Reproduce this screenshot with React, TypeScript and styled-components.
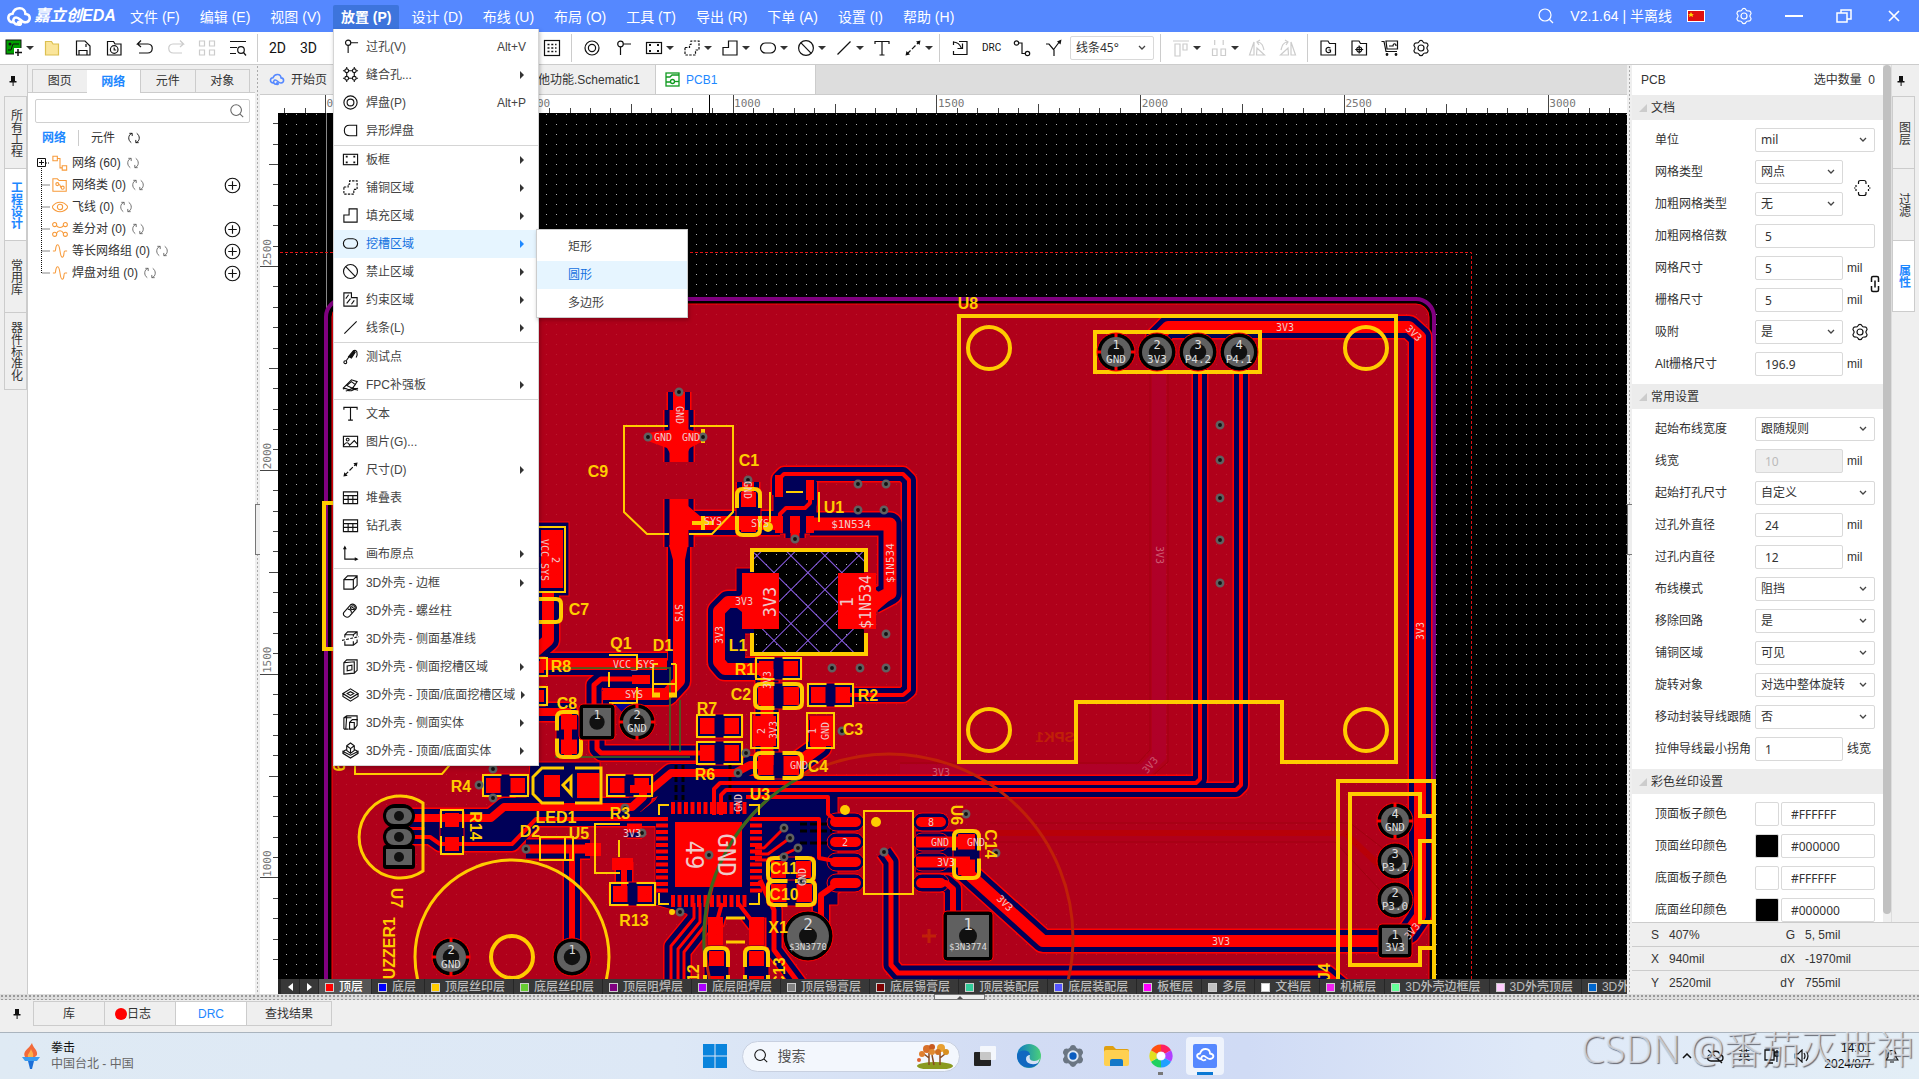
import React from "react";
import styled, { createGlobalStyle } from "styled-components";

const SANS = `"Liberation Sans", "Noto Sans CJK SC", sans-serif`;
const FIELD = `"Noto Sans", "Noto Sans CJK SC", sans-serif`;
const MONO = `"DejaVu Sans Mono", monospace`;

const Global = createGlobalStyle`
  * { box-sizing: border-box; }
  html, body { margin: 0; height: 100%; overflow: hidden; }
  #root { height: 100%; }
  body { font: 12px/16px ${SANS}; color: #333; background: #fff; }
  button, input, select { font: inherit; color: inherit; margin: 0; padding: 0; border: 0; background: none; border-radius: 0; }
  svg { display: block; flex: none; }
  a { color: inherit; text-decoration: none; }
`;

/* ---------- icons ---------- */

const ICONS: Record<string, React.ReactNode> = {
  via: <><circle cx="6.5" cy="5" r="2.8" /><path d="M9.3 5H17M6.5 7.8V16" /></>,
  stitch: <><circle cx="5" cy="5" r="2" /><circle cx="13" cy="5" r="2" /><circle cx="5" cy="13" r="2" /><circle cx="13" cy="13" r="2" /><path d="M5 1v2M5 7v4M5 15v2M13 1v2M13 7v4M13 15v2M1 5h2M7 5h4M15 5h2M1 13h2M7 13h4M15 13h2" /></>,
  pad: <><circle cx="9" cy="9" r="7" /><circle cx="9" cy="9" r="3.6" /></>,
  shape: <path d="M8 3.5H15.5V14.5H8C4.5 14.5 2.5 12 2.5 9S4.500 3.500 8 3.500Z" />,
  board: <><rect x="1.500" y="3.500" width="15" height="11" /><path d="M4 6h2M12 6h2M4 12h2M12 12h2" strokeWidth="1.800" /></>,
  copper: <path d="M2 8.500h4.500v-3h1.500v-3.500h8v9h-3.500v5H2z" strokeDasharray="2.500 1.300" />,
  fill: <path d="M2 8.500h5.500v-6.500h8.500v14H2z" />,
  slot: <rect x="1.500" y="4" width="15" height="10" rx="5" />,
  ban: <><circle cx="9" cy="9" r="7.400" /><path d="M4 3.800L14 14.200" /></>,
  rule: <><path d="M2 2h8v5h6v9H2z" /><path d="M4 8l3-4M5 13l4-5M10 14l3-4" /></>,
  line: <path d="M2.500 15.500L15.500 2.500" />,
  probe: <><circle cx="3.500" cy="15" r="1.500" /><path d="M4.500 13.500L8 8.500" /><path d="M7 9l5-6 2 1.500-4 6z" fill="currentColor" /><path d="M12 3c4-2 5 3 3 7" /></>,
  fpc: <><path d="M1 13L10 4l6 2-2 3" /><path d="M5 10l5-4 4 3-3 4zM1 14c3-3 5 2 8 0s5 0 8-1M4 16c3-2 4 1 7-1s4 0 6 0" /></>,
  text: <path d="M2 5V2.500H16V5M9 2.500V16M6.500 16h5" />,
  image: <><rect x="1.500" y="3.500" width="15" height="11" /><circle cx="6" cy="7" r="1.500" /><path d="M2 13c2-4 5-3 6 0l5-5 3.500 4" /></>,
  dim: <><path d="M3 15L15 3" strokeDasharray="5 2" /><path d="M1.500 16.500l1-4.500 3.500 3.500zM16.500 1.500l-1 4.500-3.500-3.500z" fill="currentColor" strokeWidth="0" /></>,
  table: <path d="M1.500 3h15v12.500h-15zM1.500 7h15M1.500 11h15M6.500 7v8.500M11.500 7v8.500" />,
  origin: <><path d="M3 2V15H16" /><path d="M3 .500l2 4H1zM17.500 15l-4 2v-4z" fill="currentColor" strokeWidth="0" /></>,
  box: <path d="M2 6h10v10H2zM2 6l4-4h10v10l-4 4M12 6l4-4" />,
  screw: <><path d="M2 11l7-8c3-2 7 1 6 4l-7 8c-3 3-8-1-6-4z" /><ellipse cx="11.500" cy="6" rx="2.500" ry="2" /><path d="M10 5l3 2M6 7.500c3 0 4 2 4 4" /></>,
  sideline: <><path d="M3 8V5l3-3h10v4M3 5h9l4-3M3 12v4h9l4-3v-3M12 5v2M12 12v4" /><path d="M0 11l18-4" strokeDasharray="3 1.500" /></>,
  sideslot: <path d="M2 5l11-1v12l-11 1zM2 5l3-3h11v11l-3 3M5.500 8.500l5-1v5l-5 1z" />,
  topslot: <><path d="M1 8l8-5 8 5-8 5zM1 8v3l8 5 8-5V8" /><path d="M5.500 8L9 6l3.500 2L9 10z" /></>,
  sidesolid: <><path d="M2 16V4l3-2h11v5M2 4l8 0M2 16h5M5 2l-1 14" /><path d="M8 9l3-3h5v6l-3 4H8zM8 9h5v7" /></>,
  topsolid: <><path d="M1 10l4-2M17 10l-4-2M1 10v2l8 5 8-5v-2l-8 4z" /><path d="M5 4l4-3 4 3v5l-4 3-4-3zM5 4l4 3 4-3M9 7v5" /></>,
  folder: <path d="M2.500 2.500h6l1.500 2.500h5.500v11h-13z" fill="#fae59b" stroke="#dcc050" />,
  save: <><path d="M2.500 16V2H11l5 5v9z" /><path d="M5 16v-4.500h8V16M12 5v3" /></>,
  history: <><path d="M2.500 2.500h6L10 5h6v11H2.500z" /><circle cx="9.200" cy="10.500" r="3.800" /><path d="M9.200 8.500v2.500h2" /></>,
  undo: <path d="M5 1.500L1.500 5H12c6 0 5.500 9-.500 9H3M1.500 5L5 8" />,
  redo: <path d="M13 1.500L16.500 5H6c-6 0-5.500 9 .500 9h8.500M16.500 5L13 8" />,
  grid4: <path d="M1.500 2h5v5h-5zM11.500 2h5v5h-5zM1.500 11h5v5h-5zM11.500 11h5v5h-5z" />,
  find: <><path d="M1 2.500h16M1 8.500h7M1 14.500h6" /><circle cx="12" cy="11" r="3.300" /><path d="M14.500 13.500L17 16.500" /></>,
  dots: <><rect x="1.500" y="1.500" width="15" height="15" /><path d="M4.500 5.500h9M4.500 9h9M4.500 12.500h9" strokeWidth="1.700" strokeDasharray="2 1.800" /></>,
  import: <><path d="M8 2.500h8v13H2.500V12M2.500 2.500V6" /><path d="M2 3c4 0 7 2 8.500 6.500M6.500 9.500h5v-5" /></>,
  route: <><circle cx="3.500" cy="4" r="2.200" /><circle cx="14.500" cy="14.500" r="2.200" /><path d="M5.700 4H9V14.500h3.300" /></>,
  branch: <><path d="M2 5h3l5 6v6M10 10l6-8" /><path d="M17.500 .500l-1 5-3.500-3z" fill="currentColor" strokeWidth="0" /></>,
  align: <path d="M1 2h16M3 5h5v12H3zM11 5h4v6h-4z" />,
  distribute: <path d="M2.500 10h4.500v6.500H2.500zM11 10h4.500v6.500h-4.500zM4.700 1v5M13.200 1v5" />,
  rotl: <path d="M1.500 16L6 3v13zM8.500 16h8L9 9zM9 3c5 0 6 4 7 8M12 1L9 3l2 3" />,
  rotr: <path d="M16.500 16L12 3v13zM9.500 16h-8L9 9zM9 3C4 3 3 7 2 11M6 1l3 2-2 3" />,
  gerber: <path d="M2 2h7l1.500 2.500H16.500V16H2zM11.500 9c-3-1.500-4.500 0-4.500 2s1.500 3.300 4.500 2v-2H9.500" />,
  order: <><path d="M2 2h7l1.500 2.500H16.500V16H2z" /><circle cx="9.200" cy="10.500" r="2.500" /><path d="M9.200 6.500v8M5.200 10.500h8" /></>,
  cart: <><path d="M.500 2.500H3L5 12.500h11" /><path d="M5 2h11.500v8H6zM8 7h4c0-3 3-3 3 0" /><circle cx="6" cy="15.500" r=".8" fill="currentColor" /><circle cx="15" cy="15.500" r=".8" fill="currentColor" /></>,
  gear: <><path d="M9 1.300c1.200 0 1.600.500 2 1.500.500.900 1.300 1.300 2.300 1.200 1.300-.200 2 .200 2.500 1.300.500 1 .300 1.700-.400 2.400-.700.800-.700 1.800 0 2.600.700.700.900 1.400.400 2.400-.500 1.100-1.200 1.500-2.500 1.300-1-.100-1.800.300-2.300 1.200-.400 1-.800 1.500-2 1.500s-1.600-.500-2-1.500c-.500-.900-1.300-1.300-2.300-1.200-1.300.200-2-.200-2.500-1.300-.500-1-.300-1.700.400-2.400.700-.800.700-1.800 0-2.600-.700-.700-.900-1.400-.400-2.400.500-1.100 1.200-1.500 2.500-1.300 1 .100 1.800-.300 2.300-1.200.400-1 .800-1.500 2-1.500z" /><circle cx="9" cy="9" r="3" /></>,
  search: <><circle cx="8" cy="8" r="6" /><path d="M12.500 12.500L16 16" /></>,
  sync: <><path d="M5.500 15C1 12 1 5 6.500 3M12.500 3c4.500 3 4.500 10-1 12" /><path d="M3 3h3.700v3.500M15 15h-3.700v-3.500" /></>,
  plus: <><circle cx="9" cy="9" r="7.700" /><path d="M9 4.500v9M4.500 9h9" /></>,
  net: <path d="M1 1.500h5v5H1zM11.500 12h5v5h-5zM6 4h3v10.500h2.500" />,
  netclass: <><path d="M1 16V2h5l2 2h8v12z" /><circle cx="6" cy="8" r="1.700" /><circle cx="12" cy="12" r="1.700" /><path d="M7.500 8.500c3 0 1 3 3 3.500" /></>,
  eye: <><path d="M0 9c5-7 13-7 18 0-5 7-13 7-18 0z" /><circle cx="9" cy="9" r="3" /></>,
  diff: <><circle cx="3" cy="4" r="2.300" /><circle cx="15" cy="4" r="2.300" /><circle cx="3" cy="15" r="2.300" /><circle cx="15" cy="15" r="2.300" /><path d="M5 5c2 3 6 3 8 0M5 14c2-4 6-4 8 0" /></>,
  wave: <path d="M1 9h2.500c1 0 0-7 3-7s2 14 5 14 1-7 3-7H17" />,
  snapbox: <path d="M5.500 5V3.500Q5.500 1.500 7.500 1.500H11Q13 1.500 13 3.500V5M5.500 13v1.500Q5.500 16.500 7.500 16.500H11Q13 16.500 13 14.500V13M3 6v2M3 10v2M1 9h1.500M15.500 6v2M15.500 10v2M16 9h1.500" />,
  link: <path d="M5.500 7V3Q5.500 1.500 7 1.500h4Q12.500 1.500 12.500 3v4M5.500 11v4q0 1.500 1.500 1.500h4q1.500 0 1.500-1.500v-4M9 5.500v7" strokeWidth="1.500" />,
};

const IconSvg = styled.svg<{ $c?: string }>`
  color: ${(p) => p.$c || "#111"};
  fill: none;
  stroke: currentColor;
  stroke-width: 1.2;
`;
const Icon = ({ name, size = 18, color }: { name: string; size?: number; color?: string }) => (
  <IconSvg width={size} height={size} viewBox="0 0 18 18" $c={color} aria-hidden="true">{ICONS[name]}</IconSvg>
);

const Pin = () => (
  <svg width="10" height="12" viewBox="0 0 10 12"><path d="M3 1h4v5h1.500v1.500H1.500V6H3zM4.600 7h1v4h-1z" fill="#111" /></svg>
);

/* ---------- shell ---------- */

const Page = styled.div`
  height: 100vh;
  display: flex;
  flex-direction: column;
  overflow: hidden;
`;

const TitleBar = styled.header`
  height: 32px;
  flex: none;
  display: flex;
  align-items: center;
  background: #5588ff;
  color: #fff;
  font-size: 14px;
  padding-left: 6px;
`;
const Logo = styled.div`
  display: flex;
  align-items: center;
  gap: 2px;
  width: 116px;
  font-size: 16px;
  line-height: 20px;
  font-weight: 700;
  font-style: italic;
  white-space: nowrap;
`;
const MenuBar = styled.nav`
  display: flex;
  gap: 4px;
  flex: 1;
  height: 23px;
`;
const MenuSlot = styled.div`
  position: relative;
`;
const MenuTitle = styled.button<{ $open?: boolean }>`
  height: 24px;
  padding: 0 8px;
  white-space: nowrap;
  border-radius: 2px 2px 0 0;
  background: ${(p) => (p.$open ? "#3d74dc" : "transparent")};
  font-weight: ${(p) => (p.$open ? 700 : 400)};
`;
const TitleInfo = styled.div`
  display: flex;
  align-items: center;
  gap: 15px;
  margin-right: 14px;
`;
const WindowButton = styled.button`
  width: 50px;
  height: 32px;
  display: grid;
  place-items: center;
`;

/* ---------- drop-down menu ---------- */

const Menu = styled.div`
  position: absolute;
  z-index: 10;
  top: 24px;
  left: 0;
  width: 206px;
  padding-top: 4px;
  background: #fff;
  color: #444;
  font-size: 12px;
  border: solid #d5d5d5;
  border-width: 0 1px 1px;
  box-shadow: 1px 2px 4px rgba(0, 0, 0, 0.25);
`;
const MenuGroup = styled.div`
  & + & { border-top: 1px solid #d5d5d5; }
`;
const MenuRow = styled.button<{ $on?: boolean }>`
  width: 100%;
  height: 28px;
  display: grid;
  grid-template-columns: 18px 1fr auto;
  gap: 6px;
  align-items: center;
  padding: 0 12px 0 8px;
  text-align: left;
  white-space: nowrap;
  background: ${(p) => (p.$on ? "#e6f5ff" : "#fff")};
  color: ${(p) => (p.$on ? "#1471e0" : "#444")};
`;
const MenuArrow = styled.span<{ $on?: boolean }>`
  border: 4px solid transparent;
  border-left-color: ${(p) => (p.$on ? "#1e88ff" : "#333")};
  border-right-width: 0;
  margin-right: 2px;
`;
const SubMenu = styled.div`
  position: absolute;
  top: 200px;
  left: 202px;
  width: 152px;
  padding: 3px 0 0;
  background: #fff;
  border: 1px solid #ccc;
  box-shadow: 1px 2px 4px rgba(0, 0, 0, 0.25);
`;
const SubRow = styled.button<{ $on?: boolean }>`
  display: block;
  width: 100%;
  height: 28px;
  padding-left: 31px;
  text-align: left;
  background: ${(p) => (p.$on ? "#e6f5ff" : "#fff")};
  color: ${(p) => (p.$on ? "#1471e0" : "#444")};
`;

type Entry = [icon: string, label: string, extra?: string];
const MENU: Entry[][] = [
  [["via", "过孔(V)", "Alt+V"], ["stitch", "缝合孔...", ">"], ["pad", "焊盘(P)", "Alt+P"], ["shape", "异形焊盘"]],
  [["board", "板框", ">"], ["copper", "铺铜区域", ">"], ["fill", "填充区域", ">"], ["slot", "挖槽区域", ">"], ["ban", "禁止区域", ">"], ["rule", "约束区域", ">"], ["line", "线条(L)", ">"]],
  [["probe", "测试点"], ["fpc", "FPC补强板", ">"]],
  [["text", "文本"], ["image", "图片(G)..."], ["dim", "尺寸(D)", ">"], ["table", "堆叠表"], ["table", "钻孔表"], ["origin", "画布原点", ">"]],
  [["box", "3D外壳 - 边框", ">"], ["screw", "3D外壳 - 螺丝柱"], ["sideline", "3D外壳 - 侧面基准线"], ["sideslot", "3D外壳 - 侧面挖槽区域", ">"], ["topslot", "3D外壳 - 顶面/底面挖槽区域", ">"], ["sidesolid", "3D外壳 - 侧面实体", ">"], ["topsolid", "3D外壳 - 顶面/底面实体", ">"]],
];

const PlaceMenu = () => (
  <Menu role="menu">
    {MENU.map((group, i) => (
      <MenuGroup key={i}>
        {group.map(([icon, label, extra]) => {
          const on = label === "挖槽区域";
          return (
            <MenuRow key={label} $on={on} role="menuitem">
              <Icon name={icon} size={17} />
              <span>{label}</span>
              {extra === ">" ? <MenuArrow $on={on} /> : <span>{extra}</span>}
            </MenuRow>
          );
        })}
      </MenuGroup>
    ))}
    <SubMenu role="menu">
      {["矩形", "圆形", "多边形"].map((t) => <SubRow key={t} $on={t === "圆形"} role="menuitem">{t}</SubRow>)}
    </SubMenu>
  </Menu>
);

/* ---------- toolbar ---------- */

const ToolBar = styled.div`
  height: 33px;
  flex: none;
  display: flex;
  align-items: center;
  background: #fff;
  border-bottom: 1px solid #ccc;
`;
const Tool = styled.button<{ $drop?: boolean }>`
  flex: none;
  width: ${(p) => (p.$drop ? 38 : 31)}px;
  height: 32px;
  padding-left: 5px;
  display: flex;
  align-items: center;
  gap: 3px;
  color: #111;
`;
const Caret = styled.span`
  border: 4px solid transparent;
  border-top-color: #333;
  border-bottom-width: 0;
`;
const Divider = styled.span`
  flex: none;
  width: 1px;
  height: 28px;
  margin: 0 6px 0 2px;
  background: #ccc;
`;
const ToolText = styled.span<{ $small?: boolean }>`
  font-size: ${(p) => (p.$small ? 10 : 14)}px;
  font-family: "Roboto", ${SANS};
`;
const ToolGap = styled.span`
  flex: none;
  width: 212px;
`;
const Tools = ({ items }: { items: string[] }) => (
  <>
    {items.map((item) => {
      const drop = item.endsWith("+");
      const dim = item.startsWith("~");
      const name = item.replace(/[+~]/g, "");
      return (
        <Tool key={item} $drop={drop} aria-label={name}>
          <Icon name={name} color={dim ? "#ccc" : undefined} />
          {drop && <Caret />}
        </Tool>
      );
    })}
  </>
);

const SelectBox = styled.span<{ $w: number }>`
  display: grid;
  grid-template-columns: 1fr 22px;
  align-items: center;
  flex: none;
  width: ${(p) => p.$w}px;
  height: 24px;
  background: #fff;
  border: 1px solid #d9d9d9;
  border-radius: 2px;
  font-family: ${FIELD};
  select {
    grid-area: 1 / 1 / 2 / 3;
    width: 100%;
    height: 22px;
    padding-left: 5px;
    appearance: none;
    outline: 0;
  }
  svg { grid-area: 1 / 2; pointer-events: none; justify-self: center; }
`;
const Select = ({ id, value, w, label }: { id?: string; value: string; w: number; label?: string }) => (
  <SelectBox $w={w}>
    <select id={id} aria-label={label}><option>{value}</option></select>
    <svg width="8" height="6" viewBox="0 0 8 6"><path d="M1 1l3 3 3-3" fill="none" stroke="#444" strokeWidth="1.300" /></svg>
  </SelectBox>
);
const ToolSelect = styled.span`
  margin-right: 4px;
  display: flex;
`;

/* ---------- work area ---------- */

const Work = styled.div`
  flex: 1;
  min-height: 0;
  display: flex;
`;
const SideRail = styled.div<{ $right?: boolean }>`
  width: 28px;
  flex: none;
  display: flex;
  flex-direction: column;
  background: #efefef;
  ${(p) => (p.$right ? "border-left: 1px solid #ddd; padding-right: 4px;" : "border-right: 1px solid #ccc; padding-left: 4px;")}
`;
const RailPin = styled.button`
  height: 31px;
  width: 18px;
  display: grid;
  place-items: center;
`;
const RailTab = styled.button<{ $on?: boolean; $h: number }>`
  height: ${(p) => p.$h}px;
  flex: none;
  display: grid;
  place-items: center;
  writing-mode: vertical-rl;
  border: 1px solid #ccc;
  border-bottom-width: 0;
  background: ${(p) => (p.$on ? "#fff" : "#efefef")};
  color: ${(p) => (p.$on ? "#1e88ff" : "#333")};
  font-weight: ${(p) => (p.$on ? 700 : 400)};
  &:last-child { border-bottom-width: 1px; }
`;

const LeftPanel = styled.aside`
  width: 227px;
  flex: none;
  background: #fff;
`;
const PanelTabs = styled.div`
  display: flex;
  height: 28px;
  padding: 4px 6px 0 4px;
  background: linear-gradient(#ccc, #ccc) bottom / 100% 1px no-repeat #efefef;
`;
const PanelTab = styled.button<{ $on?: boolean }>`
  flex: 1;
  border: solid #ccc;
  border-width: 1px 1px ${(p) => (p.$on ? 0 : 1)}px ${(p) => (p.$on ? 0 : 1)}px;
  margin-right: -1px;
  background: ${(p) => (p.$on ? "#fff" : "#efefef")};
  color: ${(p) => (p.$on ? "#1e88ff" : "#333")};
  font-weight: ${(p) => (p.$on ? 700 : 400)};
`;
const SearchField = styled.label`
  display: flex;
  align-items: center;
  height: 24px;
  margin: 6px 5px 0 7px;
  padding: 0 4px;
  border: 1px solid #d0d0d0;
  border-radius: 2px;
  input { flex: 1; min-width: 0; outline: 0; }
`;
const Filter = styled.div`
  display: flex;
  align-items: center;
  height: 29px;
  padding-left: 14px;
  gap: 12px;
  i { width: 1px; height: 16px; background: #ccc; }
`;
const FilterLink = styled.button<{ $on?: boolean }>`
  color: ${(p) => (p.$on ? "#1e88ff" : "#333")};
  font-weight: ${(p) => (p.$on ? 700 : 400)};
`;
const TreeRow = styled.div`
  display: flex;
  align-items: center;
  height: 22px;
  padding: 0 14px 0 6px;
  white-space: nowrap;
  > span { margin: 0 5px 0 4px; }
  button { margin-left: auto; }
`;
const TREE: [string, string, boolean][] = [
  ["net", "网络 (60)", false],
  ["netclass", "网络类 (0)", true],
  ["eye", "飞线 (0)", false],
  ["diff", "差分对 (0)", true],
  ["wave", "等长网络组 (0)", true],
  ["wave", "焊盘对组 (0)", true],
];

const Splitter = styled.div`
  flex: none;
  width: 5px;
  display: flex;
  align-items: center;
  background: radial-gradient(circle, #aaa 1px, transparent 1px) 0 0 / 5px 4px, #efefef;
`;
const Grip = styled.span`
  width: 5px;
  height: 51px;
  background: #eee;
  border: 1px solid #777;
  border-right: 0;
`;

const Center = styled.main`
  flex: 1;
  min-width: 0;
  display: grid;
  grid-template: 30px 18px 1fr 15px / 18px minmax(0, 1fr);
`;
const DocTabs = styled.div`
  grid-column: 1 / 3;
  display: flex;
  background: #ddd;
  border-bottom: 1px solid #ccc;
`;
const DocTab = styled.button<{ $w: number; $on?: boolean; $end?: boolean }>`
  width: ${(p) => p.$w}px;
  flex: none;
  display: flex;
  align-items: center;
  justify-content: ${(p) => (p.$end ? "flex-end" : "flex-start")};
  gap: 6px;
  padding: 0 15px 0 9px;
  white-space: nowrap;
  border-right: 1px solid #ccc;
  background: ${(p) => (p.$on ? "#fff" : "#efefef")};
  color: ${(p) => (p.$on ? "#1e88ff" : "#333")};
`;
const Drawing = styled.svg`
  width: 100%;
  height: 100%;
  overflow: hidden;
  min-height: 0;
`;

const LayerBar = styled.div`
  grid-column: 2;
  display: flex;
  overflow: hidden;
  background: #383838;
`;
const LayerArrows = styled.div`
  display: flex;
  flex: none;
  gap: 1px;
  padding-left: 3px;
  background: #262626;
  button { width: 18px; display: grid; place-items: center; background: #383838; }
`;
const LayerTab = styled.button<{ $on?: boolean }>`
  flex: none;
  display: flex;
  align-items: center;
  gap: 5px;
  padding: 1px 8px 0 6px;
  line-height: 14px;
  border-left: 1px solid #262626;
  background: ${(p) => (p.$on ? "#555" : "#383838")};
  color: ${(p) => (p.$on ? "#fff" : "#bbb")};
  font-weight: 500;
  white-space: nowrap;
`;
const Swatch = styled.i<{ $c: string }>`
  width: 9px;
  height: 9px;
  background: ${(p) => p.$c};
  border: 1px solid #ccc;
`;
const LAYERS: [string, string][] = [
  ["顶层", "#ff0000"], ["底层", "#0000ff"], ["顶层丝印层", "#ffcc00"], ["底层丝印层", "#66cc33"],
  ["顶层阻焊层", "#800080"], ["底层阻焊层", "#aa00ff"], ["顶层锡膏层", "#808080"], ["底层锡膏层", "#800000"],
  ["顶层装配层", "#33cc99"], ["底层装配层", "#5555ff"], ["板框层", "#ff00ff"], ["多层", "#c0c0c0"],
  ["文档层", "#ffffff"], ["机械层", "#f022f0"], ["3D外壳边框层", "#66ff99"], ["3D外壳顶层", "#ffccff"], ["3D外壳底层", "#0066cc"],
];

/* ---------- right panel ---------- */

const RightPanel = styled.aside`
  width: 287px;
  flex: none;
  display: flex;
  flex-direction: column;
  background: #efefef;
`;
const RightTop = styled.div`
  flex: 1;
  min-height: 0;
  display: flex;
`;
const Props = styled.div`
  flex: 1;
  overflow: hidden;
  background: #fff;
`;
const PropsHead = styled.div`
  display: flex;
  justify-content: space-between;
  align-items: center;
  height: 30px;
  padding: 0 8px 0 9px;
`;
const Section = styled.h2`
  display: flex;
  align-items: center;
  gap: 4px;
  height: 25px;
  margin: 0;
  padding-left: 7px;
  background: #ececec;
  font-size: 12px;
  font-weight: 400;
  &::before {
    content: "";
    border: 4px solid #ccc;
    border-top-color: transparent;
    border-left-color: transparent;
  }
`;
const Rows = styled.div`
  display: grid;
  padding: 4px 0;
`;
const Row = styled.div`
  display: flex;
  align-items: center;
  height: 32px;
  padding-left: 23px;
  white-space: nowrap;
  > label { width: 100px; flex: none; }
`;
const Input = styled.input<{ $w: number }>`
  width: ${(p) => p.$w}px;
  height: 24px;
  padding: 0 9px;
  background: #fff;
  border: 1px solid #d9d9d9;
  border-radius: 2px;
  font-family: ${FIELD};
  outline: 0;
  &:disabled { background: #efefef; color: #bbb; }
`;
const Unit = styled.span`
  margin-left: 4px;
`;
const Extra = styled.button<{ $between?: boolean }>`
  margin-left: ${(p) => (p.$between ? 10 : 8)}px;
  ${(p) => p.$between && "align-self: flex-end; margin-bottom: -9px;"}
`;
const LinkExtra = styled(Extra)`
  margin-left: 4px;
`;
const ColorBox = styled.button<{ $c: string }>`
  width: 24px;
  height: 24px;
  margin-right: 2px;
  border: 1px solid #d9d9d9;
  border-radius: 2px;
  background: ${(p) => p.$c};
`;
const ScrollTrack = styled.div`
  width: 8px;
  flex: none;
  background: #efefef;
  &::before {
    content: "";
    display: block;
    height: calc(100% - 8px);
    background: #c1c1c1;
    border-radius: 4px;
  }
`;
const Status = styled.div`
  display: grid;
  grid-template-columns: 27px 90px 26px 1fr;
  column-gap: 10px;
  align-items: center;
  height: 24px;
  border-top: 1px solid #ccc;
  span:nth-child(odd) { text-align: right; }
`;

type Field = { l: string; v: string; k?: "select" | "short" | "input"; u?: string; off?: boolean; x?: string };
const DOC: Field[] = [
  { l: "单位", v: "mil", k: "select" },
  { l: "网格类型", v: "网点", k: "short", x: "snapbox" },
  { l: "加粗网格类型", v: "无", k: "short" },
  { l: "加粗网格倍数", v: "5", k: "input" },
  { l: "网格尺寸", v: "5", u: "mil", x: "link" },
  { l: "栅格尺寸", v: "5", u: "mil" },
  { l: "吸附", v: "是", k: "short", x: "gear" },
  { l: "Alt栅格尺寸", v: "196.9", u: "mil" },
];
const COMMON: Field[] = [
  { l: "起始布线宽度", v: "跟随规则", k: "select" },
  { l: "线宽", v: "10", u: "mil", off: true },
  { l: "起始打孔尺寸", v: "自定义", k: "select" },
  { l: "过孔外直径", v: "24", u: "mil" },
  { l: "过孔内直径", v: "12", u: "mil" },
  { l: "布线模式", v: "阻挡", k: "select" },
  { l: "移除回路", v: "是", k: "select" },
  { l: "铺铜区域", v: "可见", k: "select" },
  { l: "旋转对象", v: "对选中整体旋转", k: "select" },
  { l: "移动封装导线跟随", v: "否", k: "select" },
  { l: "拉伸导线最小拐角", v: "1", u: "线宽" },
];
const COLORS: [string, string][] = [["顶面板子颜色", "#FFFFFF"], ["顶面丝印颜色", "#000000"], ["底面板子颜色", "#FFFFFF"], ["底面丝印颜色", "#000000"]];

const FieldRow = ({ f }: { f: Field }) => (
  <Row>
    <label htmlFor={f.l}>{f.l}</label>
    {f.k === "select" && <Select id={f.l} value={f.v} w={120} />}
    {f.k === "short" && <Select id={f.l} value={f.v} w={88} />}
    {f.k === "input" && <Input id={f.l} defaultValue={f.v} $w={120} />}
    {!f.k && <Input id={f.l} defaultValue={f.v} $w={88} disabled={f.off} />}
    {f.u && <Unit>{f.u}</Unit>}
    {f.x === "gear" && <Extra aria-label="设置"><Icon name="gear" /></Extra>}
    {f.x === "snapbox" && <Extra $between aria-label="网格"><Icon name="snapbox" /></Extra>}
    {f.x === "link" && <LinkExtra $between aria-label="关联"><Icon name="link" /></LinkExtra>}
  </Row>
);

/* ---------- PCB drawing ---------- */

const RED = "#ff0000";
const NAVY = "#000058";
const YEL = "#ffcc00";

type Trace = [d: string, w: number];
const TRACES: Trace[] = [
  ["M1157 350V338L1168 327H1409L1420 337V916L1409 932L1395 941H1043L962 868", 12],
  ["M1200 365V779L1196 783H720L714 789V815", 4],
  ["M1241 365V785L1236 790H726L721 795V815", 4],
  ["M884 852L891 862V965L898 973H1327L1350 992", 5],
  ["M930 883H946L953 889V920", 6],
  ["M679 392V437", 12],
  ["M679 410V462", 19],
  ["M679 499V547", 19],
  ["M679 540V681L667 694H603", 12],
  ["M679 523H780", 14],
  ["M748 482V506", 12],
  ["M779 495V479L784 474H903L909 480V690L903 695H845", 4],
  ["M810 482V503L805 508H786L780 514V524", 4],
  ["M795 518V538", 9],
  ["M810 524H890V593L873 602", 13],
  ["M755 602H728L719 611V662L725 669H767", 12],
  ["M767 669V765", 13],
  ["M820 720V747L795 765", 12],
  ["M540 664H667", 12],
  ["M648 679H601L594 685V712", 5],
  ["M597 737V749L601 753H705", 5],
  ["M548 592V640L525 660", 12],
  ["M535 712H568V757", 8],
  ["M630 789H652L671 773H735L750 765H767", 8],
  ["M410 818H491L504 807H632L643 797V785", 8],
  ["M410 837H430L440 844H512L536 819H668", 4],
  ["M572 848V957", 6],
  ["M526 849H590", 9],
  ["M627 828H642", 9],
  ["M624 862V893", 6],
  ["M746 797H828V814L838 822", 4],
  ["M755 819H819V858L840 862", 4],
  ["M755 848H764L784 828", 3],
  ["M755 854H768L790 838", 3],
  ["M755 860H772L798 848", 3],
  ["M838 883L821 895V926", 6],
  ["M706 903V924L684 952V985", 3],
  ["M700 903V922L678 949V985", 3],
  ["M694 903V918L671 946V985", 3],
  ["M722 903L716 925", 4],
  ["M738 903L755 925", 4],
  ["M760 880L774 910V950L800 985", 5],
  ["M916 842H975", 11],
  ["M916 862H970", 11],
];
const JOINTS = [[830, 861], [916, 946]];

type Part = [x: number, y: number, w: number, h: number, vertical?: boolean, round?: boolean];
const PARTS: Part[] = [
  [737, 489, 23, 46, true, true],
  [756, 658, 45, 21],
  [755, 684, 47, 24, false, true],
  [808, 684, 45, 22],
  [755, 753, 47, 25, false, true],
  [697, 715, 45, 22],
  [697, 742, 45, 22],
  [557, 712, 24, 45, true, true],
  [502, 658, 45, 18],
  [502, 687, 45, 18],
  [483, 775, 45, 21],
  [607, 775, 45, 21],
  [441, 810, 22, 44, true],
  [610, 883, 45, 22],
  [768, 858, 46, 23, false, true],
  [768, 881, 47, 24, false, true],
  [954, 831, 25, 47, true, true],
  [705, 948, 23, 46, true, true],
  [745, 948, 23, 46, true, true],
];

const VIAS = [
  [1220, 425], [1220, 460], [1220, 498], [1220, 540], [1220, 583], [679, 392], [648, 437], [703, 437], [748, 480],
  [858, 484], [886, 484], [858, 510], [884, 510], [795, 539], [886, 634], [832, 668], [860, 668], [886, 668],
  [842, 731], [746, 753], [738, 773], [493, 769], [479, 785], [493, 798], [526, 849], [625, 808], [642, 833],
  [709, 855], [784, 828], [790, 838], [798, 848], [784, 857], [802, 881], [680, 912], [884, 852], [966, 814], [996, 853],
];

type Pad = [x: number, y: number, r: number, n: string, net: string, square?: boolean, fs?: number];
const PADS: Pad[] = [
  [1116, 352, 15, "1", "GND"], [1157, 352, 15, "2", "3V3"], [1198, 352, 15, "3", "P4.2"], [1239, 352, 15, "4", "P4.1"],
  [1395, 821, 14, "4", "GND"], [1395, 861, 14, "3", "P3.1"], [1395, 900, 14, "2", "P3.0"], [1395, 941, 13, "1", "3V3", true],
  [597, 722, 14, "1", "", true], [637, 722, 14, "2", "GND"],
  [451, 957, 15, "2", "GND"], [572, 957, 15, "1", ""],
  [808, 936, 21, "2", "$3N3770", false, 9], [968, 936, 21, "1", "$3N3774", true, 9],
];
const BARE: [number, boolean][] = [[816, false], [837, false], [857, true]];

type Label = [t: string, x: number, y: number, rot?: number];
const NAMES: Label[] = [
  ["U8", 968, 303], ["C9", 598, 471], ["C1", 749, 460], ["U1", 834, 507], ["L1", 738, 645], ["Q1", 621, 643], ["D1", 663, 645],
  ["R1", 745, 669], ["C2", 741, 694], ["R2", 868, 695], ["C3", 853, 729], ["C4", 818, 766], ["R7", 707, 708], ["R6", 705, 774],
  ["C8", 567, 703], ["R8", 561, 666], ["C7", 579, 609], ["R4", 461, 786], ["R3", 620, 813], ["LED1", 556, 817], ["D2", 530, 831],
  ["U5", 579, 833], ["R14", 476, 826, 90], ["U7", 397, 898, 90], ["R13", 634, 920], ["U3", 760, 794], ["C11", 784, 868], ["C10", 784, 894],
  ["X1", 778, 927], ["C12", 693, 979, -90], ["C13", 779, 972, -90], ["U6", 957, 815, 90], ["C14", 991, 844, 90], ["J4", 1324, 972, -90],
  ["BUZZER1", 389, 954, -90], ["9", 339, 767, 90],
];
const NETS: [t: string, x: number, y: number, rot?: number, fs?: number, dim?: boolean][] = [
  ["3V3", 1285, 327], ["3V3", 1414, 333, 45], ["3V3", 1420, 631, -90], ["3V3", 1160, 555, 90, 10, true], ["3V3", 1150, 765, -50, 10, true],
  ["3V3", 941, 772, 0, 10, true], ["3V3", 1221, 941], ["3V3", 1005, 903, 45], ["3V3", 1412, 931, -50],
  ["GND", 680, 415, 90], ["GND", 663, 437], ["GND", 691, 437], ["SYS", 713, 521], ["SYS", 760, 523], ["SYS", 679, 613, 90],
  ["$1N534", 851, 524, 0, 11], ["$1N534", 890, 563, -90, 11], ["3V3", 744, 601], ["3V3", 719, 635, -90], ["3V3", 770, 602, -90, 17],
  ["1", 847, 602, -90, 17], ["$1N534", 866, 602, -90, 15], ["VCC_SYS", 634, 664], ["SYS", 634, 694], ["3V3", 773, 730, -90], ["2", 761, 731, -90],
  ["1", 812, 731, -90], ["GND", 825, 731, -90], ["GND", 799, 765], ["3V3", 632, 833], ["VCC_SYS", 545, 560, 90], ["2", 556, 560, 90],
  ["2", 845, 842], ["8", 931, 822], ["GND", 940, 842], ["3V3", 946, 862], ["GND", 976, 842], ["GND", 738, 803, -90], ["3V3", 767, 680, -90],
  ["49", 695, 855, 90, 24], ["GND", 727, 855, 90, 24], ["GND", 802, 877, -90], ["GND", 748, 490, 90],
];

const pinRow = Array.from({ length: 12 }, (_, i) => i);

/* Silkscreen of a two-terminal part: two brackets that leave a gap at the middle. */
const partOutline = ([x, y, w, h, vertical, round]: Part) => {
  const r = round ? 6 : 0;
  const right = x + w;
  const bottom = y + h;
  if (vertical) {
    const mid = y + h / 2;
    return `M${x} ${mid - 4}V${y + r}Q${x} ${y} ${x + r} ${y}H${right - r}Q${right} ${y} ${right} ${y + r}V${mid - 4}`
      + `M${x} ${mid + 4}V${bottom - r}Q${x} ${bottom} ${x + r} ${bottom}H${right - r}Q${right} ${bottom} ${right} ${bottom - r}V${mid + 4}`;
  }
  const mid = x + w / 2;
  return `M${mid - 4} ${y}H${x + r}Q${x} ${y} ${x} ${y + r}V${bottom - r}Q${x} ${bottom} ${x + r} ${bottom}H${mid - 4}`
    + `M${mid + 4} ${y}H${right - r}Q${right} ${y} ${right} ${y + r}V${bottom - r}Q${right} ${bottom} ${right - r} ${bottom}H${mid + 4}`;
};

const Board = () => (
  <Drawing role="img" aria-label="PCB1">
    <defs>
      <pattern id="dots" width="10" height="10" patternUnits="userSpaceOnUse">
        <rect x="6" y="4" width="1" height="1" fill="#b0b0b0" />
      </pattern>
      <pattern id="dotsRed" width="10" height="10" patternUnits="userSpaceOnUse">
        <rect x="6" y="4" width="1" height="1" fill="#bc1c30" />
      </pattern>
      <pattern id="hatch" width="24" height="24" patternUnits="userSpaceOnUse" patternTransform="translate(757 555) rotate(45)">
        <path d="M0 0H24M0 0V24" stroke="#9060f0" strokeWidth="2" fill="none" />
      </pattern>
    </defs>
    <g transform="translate(-278 -113)">
      <rect x="270" y="110" width="3000" height="2000" fill="#000" />
      <rect x="270" y="110" width="3000" height="2000" fill="url(#dots)" />
      <path d="M326.500 110V1200" stroke="#888" />
      <path d="M270 252.500H1471.500V1200" stroke="#e01010" strokeDasharray="3 2" fill="none" />

      <rect x="326" y="299" width="1108" height="800" rx="18" fill="#000" stroke="#800080" strokeWidth="4" />
      <rect x="332" y="304" width="1097" height="800" rx="13" fill="#b0001a" stroke={RED} strokeWidth="1" />
      <rect x="332" y="304" width="1097" height="800" rx="13" fill="url(#dotsRed)" />

      {/* bottom-layer copper showing through the pour */}
      <g fill="none" stroke="#a00010" strokeWidth="1">
        <path d="M1150 372V750L1138 763H900M1168 372V762L1150 778" />
        <path d="M990 823H1350L1385 850M990 842H1335L1380 890" />
      </g>
      <path d="M990 833H1345L1395 880" fill="none" stroke="#b80008" strokeWidth="6" />
      <path d="M1159 372V756L1144 771H900" fill="none" stroke="#b00028" strokeWidth="14" />

      {/* clearances */}
      <g fill="none" strokeLinejoin="round" stroke={RED}>
        {TRACES.map(([d, w], i) => <path key={i} d={d} strokeWidth={w + 13} />)}
      </g>
      <g fill={NAVY} stroke={RED} strokeWidth="1">
        <path d="M664 784L676 780H742L752 790H838V905H772V918H700L655 905V824L640 812L655 800Z" />
        <path d="M424 824H490L512 812H535L516 842H440L424 834Z" />
        <path d="M530 762H600V806H500L528 790Z" />
        <rect x="773" y="478" width="44" height="56" />
        <rect x="736" y="568" width="20" height="66" />
        <rect x="640" y="660" width="36" height="42" />
        <rect x="537" y="522" width="32" height="74" />
      </g>
      <g fill="none" strokeLinejoin="round" stroke={NAVY}>
        {TRACES.map(([d, w], i) => <path key={i} d={d} strokeWidth={w + 10} />)}
      </g>
      <path d="M727 612L745 606V660H727Z" fill={NAVY} />
      <path d="M630 705L617 690H602L622 712Z" fill="#000090" />
      {PARTS.map(([x, y, w, h], i) => <rect key={i} x={x - 1} y={y - 1} width={w + 2} height={h + 2} rx="3" fill={NAVY} stroke={RED} />)}
      {[822, 842, 862, 883].map((y) => JOINTS.map(([a, b]) => (
        <rect key={`${a}${y}`} x={a - 3} y={y - 9} width={b - a + 6} height="18" rx="9" fill={NAVY} stroke={RED} />
      )))}
      <g stroke="#000" strokeWidth="3" strokeDasharray="7 3">
        <path d="M676 765V800M683 765V800M730 765V800M800 824H832M800 831H832M800 843H832" />
      </g>
      <g fill="none" strokeLinejoin="round" stroke={RED}>
        {TRACES.map(([d, w], i) => <path key={i} d={d} strokeWidth={w} />)}
      </g>
      <path d="M648 433L669 430L679 425L690 430L703 433V441L690 448L686 455H671L667 448L648 441Z" fill={RED} />
      <path d="M669 545H688L685 560H673ZM687 505L700 516H687Z" fill={RED} />

      {/* inductor window */}
      <rect x="754" y="550" width="110" height="104" fill="#000" />
      <rect x="754" y="550" width="110" height="104" fill="url(#dots)" />
      <rect x="754" y="550" width="110" height="104" fill="url(#hatch)" />

      {/* copper pads */}
      <g fill={RED}>
        <path d="M742 573H779V629H742V612L732 604L742 594Z" />
        <path d="M838 573H876V590L890 600L876 612V629H838Z" />
        <rect x="775" y="475" width="8" height="22" /><rect x="806" y="480" width="8" height="20" />
        <rect x="775" y="516" width="8" height="17" /><rect x="790" y="516" width="10" height="17" /><rect x="806" y="516" width="8" height="17" />
        <rect x="753" y="716" width="23" height="30" /><rect x="810" y="716" width="23" height="30" />
        <rect x="541" y="530" width="22" height="58" />
        <rect x="544" y="775" width="16" height="22" /><rect x="577" y="773" width="22" height="25" />
        <rect x="612" y="858" width="21" height="12" /><rect x="632" y="675" width="18" height="9" /><rect x="585" y="843" width="16" height="13" />
        <rect x="708" y="917" width="15" height="28" /><rect x="749" y="917" width="15" height="28" />
        <rect x="675" y="822" width="67" height="65" />
        {pinRow.map((i) => (
          <React.Fragment key={i}>
            <rect x={671 + i * 6.5} y="802" width="4" height="12" /><rect x={671 + i * 6.5} y="895" width="4" height="12" />
            <rect x="656" y={817 + i * 6.5} width="12" height="4" /><rect x="750" y={817 + i * 6.5} width="12" height="4" />
          </React.Fragment>
        ))}
        {[822, 842, 862, 883].map((y) => JOINTS.map(([a, b]) => (
          <rect key={`${a}${y}`} x={a} y={y - 5} width={b - a} height="10" rx="5" />
        )))}
        {PARTS.map(([x, y, w, h, v], i) => v
          ? <React.Fragment key={i}><rect x={x + 4} y={y + 3} width={w - 8} height={h / 2 - 8} /><rect x={x + 4} y={y + h / 2 + 5} width={w - 8} height={h / 2 - 8} /></React.Fragment>
          : <React.Fragment key={i}><rect x={x + 3} y={y + 3} width={w / 2 - 8} height={h - 6} /><rect x={x + w / 2 + 5} y={y + 3} width={w / 2 - 8} height={h - 6} /></React.Fragment>)}
      </g>

      {/* bottom silkscreen */}
      <circle cx="889" cy="938" r="184" fill="none" stroke="#c02008" strokeWidth="3" />
      <path d="M801 777A184 184 0 0 0 705 960" fill="none" stroke="#3a6a20" strokeWidth="3" />
      <path d="M555 668H670V750M680 700V752M555 757H690" fill="none" stroke="#3a6a20" strokeWidth="2" opacity=".8" />
      <path d="M922 936H936M929 929V943" stroke="#c02008" strokeWidth="3" />
      <text transform="translate(1055 742) scale(-1 1)" fontFamily={SANS} fontWeight="700" fontSize="15" fill="#c02008" textAnchor="middle">SPK1</text>

      {/* top silkscreen */}
      <g fill="none" stroke={YEL} strokeWidth="2">
        <path d="M668 426H624V512L647 534H669M690 426H733V512L712 534H689" />
        <path d="M770 492V522M819 492V522M786 492H803" />
        <rect x="751" y="713" width="27" height="35" /><rect x="807" y="713" width="27" height="35" />
        <path d="M530 527H565V592H530" />
        <path d="M609 655H637V670M609 672V687M637 687V703H609" />
        <path d="M653 664V697M676 664V697M653 684H676M653 664H658M671 664H676" />
        <path d="M540 837H573V860H540ZM565 837V860" />
        <path d="M620 824H595V873H620M619 840V857" />
        <path d="M659 815V805H669M749 805H759V815M659 893V904H669M749 904H759V893" />
        <rect x="864" y="811" width="49" height="83" />
        <path d="M355 740V774H442L454 760" />
        <path d="M333 503H324V649H333" strokeWidth="4" />
        <path d="M423 803A41 41 0 1 0 423 871Z" strokeWidth="3" />
        <path d="M652 695H660M669 695H677" strokeWidth="5" />
      </g>
      <g fill="none" stroke={YEL} strokeWidth="4">
        <path d="M959 316H1396V762H1282V702H1076V762H959Z" />
        <circle cx="989" cy="348" r="21" /><circle cx="1366" cy="348" r="21" /><circle cx="989" cy="730" r="21" /><circle cx="1366" cy="730" r="21" />
        <rect x="1095" y="332" width="165" height="40" />
        <path d="M1338 1000V781H1434V816H1420V794H1350V965H1420V948H1434V1000M1434 816V948M1434 841H1420V922H1434" />
        <path d="M752 572V550H866V572M752 633V654H866V633" />
        <circle cx="512" cy="957" r="97" strokeWidth="3" /><circle cx="512" cy="957" r="21" />
        <path d="M564 768H542L533 777V794L542 803H564M575 768H601V803H575" strokeWidth="3" />
        <path d="M571 777L563 785L571 794Z" strokeWidth="3" />
        <path d="M726 918H745M726 942H745" strokeWidth="3" />
        <path d="M535 599H556Q561 599 561 604V617Q561 622 556 622H535" />
        <path d="M692 523H714M703 516V530" /><path d="M703 429V443" />
      </g>
      <g fill="none" stroke={YEL}>
        {PARTS.map((part, i) => <path key={i} d={partOutline(part)} strokeWidth={part[5] ? 4 : 2} />)}
      </g>
      <g fill={YEL}><circle cx="768" cy="527" r="5" /><circle cx="845" cy="810" r="5" /><circle cx="876" cy="822" r="5" /><circle cx="672" cy="912" r="3" /></g>

      {/* drilled pads */}
      {PADS.map(([x, y, r, n, net, sq, fs], i) => (
        <g key={i}>
          {sq
            ? <><rect x={x - r - 4} y={y - r - 4} width={2 * r + 8} height={2 * r + 8} rx="4" fill="#000" stroke={RED} /><rect x={x - r} y={y - r} width={2 * r} height={2 * r} fill="#606060" /></>
            : <><circle cx={x} cy={y} r={r + 4} fill="#000" stroke={RED} />{net === "GND" && <path d={`M${x - r - 4} ${y}H${x + r + 4}M${x} ${y - r - 4}V${y + r + 4}`} stroke={RED} strokeWidth="3" />}<circle cx={x} cy={y} r={r} fill="#606060" /></>}
          <circle cx={x} cy={y} r={r > 18 ? 9 : r * 0.55} fill="#111" />
          <text x={x} y={y - r / 2 + 4} textAnchor="middle" fontFamily={MONO} fontSize={r > 18 ? 16 : 12} fill="#ddd">{n}</text>
          {net && <text x={x} y={y + r / 2 + 3} textAnchor="middle" fontFamily={MONO} fontSize={fs || 11} fill="#ddd">{net}</text>}
        </g>
      ))}
      {BARE.map(([y, square]) => (
        <g key={y}>
          <rect x="383" y={y - 12} width="32" height="24" rx={square ? 3 : 12} fill="#000" />
          <rect x="386" y={y - 8} width="26" height="16" rx={square ? 0 : 8} fill="#606060" />
          <circle cx="399" cy={y} r="5" fill="#111" />
        </g>
      ))}
      {VIAS.map(([x, y], i) => <circle key={i} cx={x} cy={y} r="3.200" fill="#111" stroke="#606060" strokeWidth="2.500" />)}

      <g fontFamily={MONO} fill="#f0c8c8" textAnchor="middle">
        {NETS.map(([t, x, y, rot = 0, fs = 10, dim], i) => (
          <text key={i} transform={`translate(${x} ${y}) rotate(${rot})`} dy={fs * 0.36} fontSize={fs} opacity={dim ? 0.45 : 1}>{t}</text>
        ))}
      </g>
      <g fontFamily={SANS} fontWeight="700" fontSize="16" fill={YEL} textAnchor="middle">
        {NAMES.map(([t, x, y, rot = 0]) => (
          <text key={t} transform={`translate(${x} ${y}) rotate(${rot})`} dy="6">{t}</text>
        ))}
      </g>
    </g>
  </Drawing>
);

const ticks = (n: number) => Array.from({ length: n }, (_, i) => i);
const STEP = 20.38;
const TopRuler = () => (
  <Drawing>
    <g transform="translate(47.500 0)" stroke="#444" fill="none">
      {ticks(140).map((i) => {
        const k = i - 3;
        return <path key={k} d={`M${Math.round(k * STEP)} ${k % 10 === 0 ? 0 : k % 5 === 0 ? 9 : 13}V18`} />;
      })}
      <path d="M384 0V18" stroke="#000" />
      {ticks(7).map((k) => (
        <text key={k} x={k * STEP * 10 + 1} y="12" stroke="none" fill="#777" fontFamily={MONO} fontSize="11">{k * 500}</text>
      ))}
    </g>
  </Drawing>
);
const SideRuler = () => (
  <Drawing>
    <g transform="translate(0 153.500)" stroke="#444" fill="none">
      {ticks(80).map((i) => {
        const k = i - 7;
        return <path key={k} d={`M${k % 10 === 0 ? 0 : k % 5 === 0 ? 9 : 13} ${Math.round(k * STEP)}H18`} />;
      })}
      {[2500, 2000, 1500, 1000].map((v, k) => (
        <text key={v} transform={`translate(11 ${k * STEP * 10 - 1}) rotate(-90)`} stroke="none" fill="#777" fontFamily={MONO} fontSize="11">{v}</text>
      ))}
    </g>
  </Drawing>
);

/* ---------- bottom ---------- */

const BottomSplit = styled.div`
  height: 6px;
  flex: none;
  display: flex;
  justify-content: center;
  background: radial-gradient(circle, #999 1px, transparent 1px) 0 0 / 4px 4px, #ddd;
  span { width: 51px; border: 1px solid #777; background: #eee; display: grid; place-items: center; }
`;
const BottomTabs = styled.div`
  height: 33px;
  flex: none;
  display: flex;
  align-items: flex-start;
  padding-top: 1px;
  background: #efefef;
  border-bottom: 1px solid #aab4be;
  > button { height: 25px; border: solid #ccc; border-width: 1px 1px 1px 0; }
  > button:first-child { width: 34px; border-top: 0; border-bottom: 0; display: grid; place-items: center; }
`;
const BottomTab = styled.button<{ $on?: boolean }>`
  min-width: 71px;
  padding: 0 18px;
  display: flex;
  align-items: center;
  justify-content: center;
  background: ${(p) => (p.$on ? "#fff" : "#efefef")};
  color: ${(p) => (p.$on ? "#1e88ff" : "#333")};
  white-space: nowrap;
  i { width: 12px; height: 12px; border-radius: 6px; background: #f00; margin-left: -14px; }
`;
const TaskBar = styled.footer`
  position: relative;
  height: 46px;
  flex: none;
  display: grid;
  grid-template-columns: 1fr auto 1fr;
  align-items: center;
  background: linear-gradient(90deg, #dfeaf4 0, #dde8f6 35%, #d2dcf4 53%, #d0dbf5 65%, #dfe9f8 80%, #e3eef6 100%);
`;
const Weather = styled.div`
  display: flex;
  align-items: center;
  gap: 11px;
  padding-left: 22px;
  color: #666;
  b { display: block; font-weight: 400; color: #111; }
`;
const Apps = styled.div`
  display: flex;
  align-items: center;
  height: 46px;
`;
const AppButton = styled.button<{ $on?: boolean; $open?: boolean }>`
  width: 38px;
  height: 38px;
  margin: 0 3px;
  display: grid;
  place-items: center;
  border-radius: 4px;
  background: ${(p) => (p.$on
    ? "linear-gradient(#0a78d4, #0a78d4) 50% 100% / 16px 3px no-repeat, #eef3fc"
    : p.$open ? "linear-gradient(#777, #777) 50% 100% / 5px 3px no-repeat" : "transparent")};
`;
const TaskSearch = styled.label`
  display: flex;
  align-items: center;
  width: 218px;
  height: 31px;
  margin: 0 3px 0 5px;
  padding: 0 4px 0 10px;
  gap: 9px;
  border-radius: 16px;
  border: 1px solid #c8d0e0;
  background: #f3f7fd;
  input { flex: 1; min-width: 0; font-size: 14px; outline: 0; }
  input::placeholder { color: #555; opacity: 1; }
`;
const Tray = styled.div`
  display: flex;
  align-items: center;
  justify-content: flex-end;
  gap: 14px;
  padding-right: 20px;
  color: #111;
  time { text-align: right; }
`;
const Watermark = styled.div`
  position: absolute;
  right: 5px;
  bottom: 7px;
  font: 300 38px/48px "Noto Sans", "Noto Sans CJK SC", sans-serif;
  color: rgba(225, 228, 234, 0.75);
  text-shadow: 1px 1px 1px rgba(60, 60, 70, 0.75);
  white-space: nowrap;
  pointer-events: none;
`;

const Cloud = ({ w, c }: { w: number; c: string }) => (
  <svg width={w} height={w * 0.8} viewBox="0 0 26 21" fill="none" stroke={c} strokeWidth="2.600" strokeLinecap="round">
    <path d="M7 16.500C1 16 .500 8.500 6.500 7.800 9 0 19.500 1 19.500 8c6 .500 5.500 8 0 8.500C15 17 13 9.500 8.500 12c-3 3 .500 8 4.500 6" />
    <circle cx="13.500" cy="17.500" r="1.500" />
  </svg>
);

const APPS: React.ReactNode[] = [
  <svg key="a" width="24" height="24"><rect x="1" y="8" width="17" height="14" rx="1" fill="#222" /><rect x="7" y="2" width="16" height="14" rx="1" fill="#fff" opacity=".75" /></svg>,
  <svg key="b" width="24" height="24" viewBox="0 0 24 24"><defs><linearGradient id="eg" x1="0" x2="1"><stop stopColor="#0c78c4" /><stop offset="1" stopColor="#4bd07a" /></linearGradient></defs><circle cx="12" cy="12" r="12" fill="url(#eg)" /><path d="M0 12C1 5 13 5 13 11c-3 0-5 3-3 6s7 4 12 1c-5 9-21 7-22-6z" fill="#1168c0" /><path d="M13 11c-1 3 0 6 4 6 3 0 5-1 6-3l-2 5c-6 3-12 0-12-4 0-3 2-4 4-4z" fill="#d5e0f6" /></svg>,
  <svg key="c" width="24" height="24" viewBox="0 0 18 18"><g fill="#6b7683" stroke="#6b7683">{ICONS.gear}</g><circle cx="9" cy="9" r="3.500" fill="#0a5cc0" stroke="#dce6f4" strokeWidth="1.500" /></svg>,
  <svg key="d" width="25" height="22"><path d="M0 3q0-2 2-2h7l3 3h11q2 0 2 2v4H0z" fill="#e0a010" /><rect y="5" width="25" height="16" rx="2" fill="#ffd050" /><path d="M6 21v-5q0-2 2-2h9q2 0 2 2v5z" fill="#1478c8" /></svg>,
  <svg key="e" width="24" height="24" viewBox="0 0 24 24" fill="none" strokeWidth="7"><path d="M12 4a8 8 0 0 1 7 4" stroke="#ff2060" /><path d="M19 8a8 8 0 0 1 0 8" stroke="#b040ff" /><path d="M19 16a8 8 0 0 1-7 4" stroke="#20a0ff" /><path d="M12 20a8 8 0 0 1-7-4" stroke="#20d060" /><path d="M5 16a8 8 0 0 1 0-8" stroke="#e0e020" /><path d="M5 8a8 8 0 0 1 7-4" stroke="#ff5010" /><circle cx="12" cy="12" r="4" fill="#fff" stroke="none" /></svg>,
];

export default function App() {
  return (
    <>
      <Global />
      <Page>
        <TitleBar>
          <Logo><Cloud w={26} c="#fff" /><span>嘉立创EDA</span></Logo>
          <MenuBar>
            {["文件 (F)", "编辑 (E)", "视图 (V)", "放置 (P)", "设计 (D)", "布线 (U)", "布局 (O)", "工具 (T)", "导出 (R)", "下单 (A)", "设置 (I)", "帮助 (H)"].map((t) => (
              <MenuSlot key={t}>
                <MenuTitle $open={t === "放置 (P)"}>{t}</MenuTitle>
                {t === "放置 (P)" && <PlaceMenu />}
              </MenuSlot>
            ))}
          </MenuBar>
          <TitleInfo>
            <Icon name="search" color="#fff" />
            <span>V2.1.64 | 半离线</span>
            <svg width="18" height="12"><rect x=".500" y=".500" width="17" height="11" fill="#e01010" stroke="#fff" /><path d="M4 2l1 2h2L5.500 5l.500 2-2-1-2 1 .500-2L1 4h2z" fill="#ffd800" /></svg>
          </TitleInfo>
          <WindowButton aria-label="设置"><Icon name="gear" color="#fff" /></WindowButton>
          <WindowButton aria-label="最小化"><svg width="18" height="2"><rect width="18" height="2" fill="#fff" /></svg></WindowButton>
          <WindowButton aria-label="还原"><svg width="16" height="14" fill="none" stroke="#fff" strokeWidth="1.500"><path d="M1 4h10v9H1zM5 4V1h10v9h-4" /></svg></WindowButton>
          <WindowButton aria-label="关闭"><svg width="12" height="12" stroke="#fff" strokeWidth="1.700"><path d="M1 1l10 10M11 1L1 11" /></svg></WindowButton>
        </TitleBar>

        <ToolBar>
          <Tool $drop aria-label="新建">
            <svg width="18" height="18"><rect x="1" y="1" width="15" height="14" fill="#00a000" stroke="#111" /><path d="M3 11h3l2-6h6" stroke="#111" fill="none" /><circle cx="5" cy="5" r="1.500" fill="#111" /><path d="M9 9h9v9H9z" fill="#fff" /><path d="M13 10v7M10 13.500h7" stroke="#111" strokeWidth="1.500" /></svg>
            <Caret />
          </Tool>
          <Tools items={["folder", "save", "history", "undo", "~redo", "~grid4", "find"]} />
          <Divider />
          <Tool><ToolText>2D</ToolText></Tool>
          <Tool><ToolText>3D</ToolText></Tool>
          <ToolGap />
          <Tools items={["dots"]} />
          <Divider />
          <Tools items={["pad", "via", "board+", "copper+", "fill+", "slot+", "ban+", "line+", "text", "dim+"]} />
          <Divider />
          <Tools items={["import"]} />
          <Tool><ToolText $small>DRC</ToolText></Tool>
          <Tools items={["route", "branch"]} />
          <ToolSelect><Select value="线条45°" w={84} label="走线拐角" /></ToolSelect>
          <Divider />
          <Tools items={["~align+", "~distribute+", "~rotl", "~rotr"]} />
          <Divider />
          <Tools items={["gerber", "order", "cart", "gear"]} />
        </ToolBar>

        <Work>
          <SideRail>
            <RailPin aria-label="固定"><Pin /></RailPin>
            <RailTab $h={72}>所有工程</RailTab>
            <RailTab $h={72} $on>工程设计</RailTab>
            <RailTab $h={72}>常用库</RailTab>
            <RailTab $h={78}>器件标准化</RailTab>
          </SideRail>
          <LeftPanel>
            <PanelTabs>
              {["图页", "网络", "元件", "对象"].map((t) => <PanelTab key={t} $on={t === "网络"}>{t}</PanelTab>)}
            </PanelTabs>
            <SearchField><input aria-label="搜索网络" /><Icon name="search" size={16} color="#666" /></SearchField>
            <Filter>
              <FilterLink $on>网络</FilterLink><i />
              <FilterLink>元件</FilterLink>
              <Icon name="sync" size={14} />
            </Filter>
            {TREE.map(([icon, label, add], i) => (
              <TreeRow key={label}>
                <svg width="18" height="22" stroke="#111" fill="none">
                  <path d={i === 0 ? "M7.500 16V22M12 11H16" : i === 5 ? "M7.500 0V11H16" : "M7.500 0V22M7.500 11H16"} strokeDasharray="1 1" />
                  {i === 0 && <path d="M3.500 6.500h8v8h-8zM5 10.500h5M7.500 8v5" />}
                </svg>
                <Icon name={icon} size={16} color="#f79a3a" />
                <span>{label}</span>
                <Icon name="sync" size={14} color="#666" />
                {add && <button aria-label={`添加${label}`}><Icon name="plus" size={17} /></button>}
              </TreeRow>
            ))}
          </LeftPanel>
          <Splitter><Grip /></Splitter>

          <Center>
            <DocTabs>
              <DocTab $w={75}><Cloud w={16} c="#5588ff" />开始页</DocTab>
              <DocTab $w={321} $end>其他功能.Schematic1</DocTab>
              <DocTab $w={160} $on>
                <svg width="15" height="15" fill="none" stroke="#109a20" strokeWidth="1.300"><rect x="1" y="1" width="13" height="13" /><path d="M1 5h4l2-2h7M1 10h4" /><circle cx="7.500" cy="9.500" r="2" /><path d="M9.500 9.500H14" /></svg>
                PCB1
              </DocTab>
            </DocTabs>
            <span />
            <TopRuler />
            <SideRuler />
            <Board />
            <LayerBar>
              <LayerArrows>
                <button aria-label="上一层"><svg width="5" height="8"><path d="M5 0v8L0 4z" fill="#fff" /></svg></button>
                <button aria-label="下一层"><svg width="5" height="8"><path d="M0 0v8l5-4z" fill="#fff" /></svg></button>
              </LayerArrows>
              {LAYERS.map(([t, c], i) => <LayerTab key={t} $on={i === 0}><Swatch $c={c} />{t}</LayerTab>)}
            </LayerBar>
          </Center>

          <Splitter><Grip /></Splitter>
          <RightPanel>
            <RightTop>
              <Props>
                <PropsHead><span>PCB</span><span>选中数量&nbsp; 0</span></PropsHead>
                <Section>文档</Section>
                <Rows>{DOC.map((f) => <FieldRow key={f.l} f={f} />)}</Rows>
                <Section>常用设置</Section>
                <Rows>{COMMON.map((f) => <FieldRow key={f.l} f={f} />)}</Rows>
                <Section>彩色丝印设置</Section>
                <Rows>
                  {COLORS.map(([l, v]) => (
                    <Row key={l}>
                      <label htmlFor={l}>{l}</label>
                      <ColorBox $c={v} aria-label={l} />
                      <Input id={l} defaultValue={v} $w={94} />
                    </Row>
                  ))}
                </Rows>
              </Props>
              <ScrollTrack />
              <SideRail $right>
                <RailPin aria-label="固定"><Pin /></RailPin>
                <RailTab $h={72}>图层</RailTab>
                <RailTab $h={72}>过滤</RailTab>
                <RailTab $h={72} $on>属性</RailTab>
              </SideRail>
            </RightTop>
            <Status><span>S</span><span>407%</span><span>G</span><span>5, 5mil</span></Status>
            <Status><span>X</span><span>940mil</span><span>dX</span><span>-1970mil</span></Status>
            <Status><span>Y</span><span>2520mil</span><span>dY</span><span>755mil</span></Status>
          </RightPanel>
        </Work>

        <BottomSplit><span><svg width="6" height="3"><path d="M0 3L3 0l3 3z" fill="#555" /></svg></span></BottomSplit>
        <BottomTabs>
          <button aria-label="固定"><Pin /></button>
          <BottomTab>库</BottomTab>
          <BottomTab><i />日志</BottomTab>
          <BottomTab $on>DRC</BottomTab>
          <BottomTab>查找结果</BottomTab>
        </BottomTabs>

        <TaskBar>
          <Weather>
            <svg width="18" height="26"><path d="M10 0c1 5 6 7 5 12l-2 2H3C0 8 7 6 10 0z" fill="#f26a3a" /><path d="M9 6c1 3 3 4 2 8H6c-1-3 2-4 3-8z" fill="#ffb04a" /><path d="M0 14h18l-3 4H3z" fill="#3a9cf0" /><path d="M6 18h6l-2 8H8z" fill="#1c6fd8" /></svg>
            <div><b>拳击</b>中国台北 - 中国</div>
          </Weather>
          <Apps>
            <AppButton aria-label="开始"><svg width="24" height="24" fill="#0a84dc"><path d="M0 0h11.500v11.500H0zM12.500 0H24v11.500H12.500zM0 12.500h11.500V24H0zM12.500 12.500H24V24H12.500z" /></svg></AppButton>
            <TaskSearch>
              <Icon name="search" size={16} />
              <input placeholder="搜索" aria-label="搜索" />
              <svg width="42" height="26"><ellipse cx="22" cy="23" rx="18" ry="4" fill="#8a9a20" /><path d="M16 22V10M27 22V10M16 15l-5-4M27 15l5-4M21 22l-2-10" stroke="#8a4a20" strokeWidth="1.500" /><circle cx="14" cy="6" r="4" fill="#d8702a" /><circle cx="19" cy="4" r="3" fill="#c85a20" /><circle cx="19" cy="9" r="3" fill="#e08a30" /><circle cx="28" cy="5" r="4" fill="#e8a030" /><circle cx="33" cy="9" r="3" fill="#d89020" /><circle cx="25" cy="9" r="3" fill="#d07020" /><circle cx="9" cy="11" r="3" fill="#e08030" /><circle cx="6" cy="17" r="2" fill="#e06030" /></svg>
            </TaskSearch>
            {APPS.map((a, i) => <AppButton key={i} $open={i === 4} aria-label={`应用 ${i + 1}`}>{a}</AppButton>)}
            <AppButton $on aria-label="嘉立创EDA"><svg width="24" height="24"><rect width="24" height="24" rx="2" fill="#5588ff" /><g transform="translate(3 4)" fill="none" stroke="#fff" strokeWidth="1.800"><path d="M5 11C0 10 0 6 4 5.500 6-1 14 0 14 5.500c5 1 4 5 0 5.500-4 0-5-5-8-2.500-2 3 1 5 4 3" /></g></svg></AppButton>
          </Apps>
          <Tray>
            <svg width="10" height="6" fill="none" stroke="#111" strokeWidth="1.500"><path d="M1 5l4-4 4 4" /></svg>
            <svg width="18" height="16" fill="none" stroke="#111" strokeWidth="1.300"><path d="M5 13C0 13 1 7 5 7c1-5 8-5 9 0 4 0 4 6 0 6zM2 2l14 13" /></svg>
            <span>英</span>
            <svg width="16" height="16" fill="none" stroke="#111" strokeWidth="1.300"><path d="M1 2h9v10H1zM3 15h6M13 2v5M11 4h4v4h-4zM13 8v6" /></svg>
            <svg width="16" height="14" fill="none" stroke="#111" strokeWidth="1.200"><path d="M1 5h3l4-4v12L4 9H1zM10 4q2 3 0 6M12 2q4 5 0 10" /></svg>
            <time>14:01<br />2024/8/7</time>
            <svg width="14" height="15" fill="none" stroke="#111" strokeWidth="1.200"><path d="M1 11h12l-2-3V6c0-6-8-6-8 0v2zM5 13h4" /></svg>
          </Tray>
          <Watermark>CSDN @番茄灭世神</Watermark>
        </TaskBar>
      </Page>
    </>
  );
}
